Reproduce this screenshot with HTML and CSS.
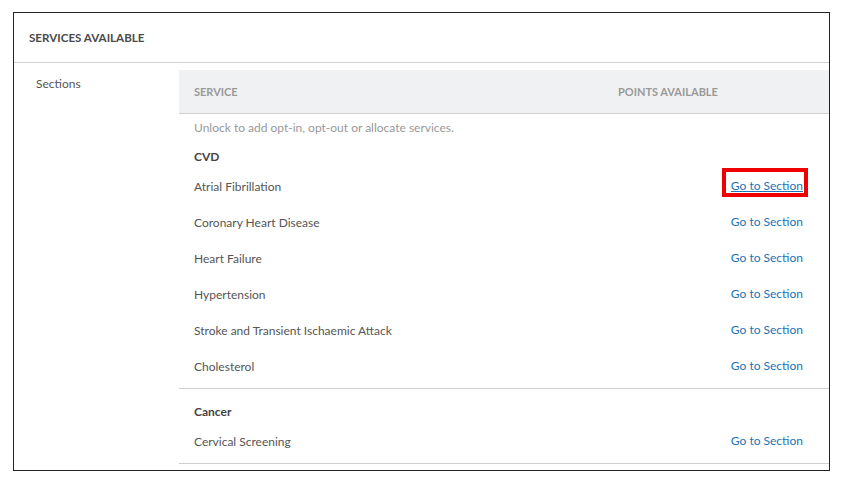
FILE: index.html
```html
<!DOCTYPE html>
<html>
<head>
<meta charset="utf-8">
<link rel="stylesheet" href="styles.css">
</head>
<body>
<div class="panel">
  <div class="panel-head">SERVICES AVAILABLE</div>
  <div class="panel-body">
    <div class="side">Sections</div>
    <div class="table">
      <div class="thead">
        <div class="col-service">SERVICE</div>
        <div class="col-points">POINTS AVAILABLE</div>
      </div>
      <div class="desc">Unlock to add opt-in, opt-out or allocate services.</div>
      <div class="group first">
        <div class="group-title">CVD</div>
        <div class="row"><span>Atrial Fibrillation</span><a class="link focused" href="#">Go to Section</a></div>
        <div class="row"><span>Coronary Heart Disease</span><a class="link" href="#">Go to Section</a></div>
        <div class="row"><span>Heart Failure</span><a class="link" href="#">Go to Section</a></div>
        <div class="row"><span>Hypertension</span><a class="link" href="#">Go to Section</a></div>
        <div class="row"><span>Stroke and Transient Ischaemic Attack</span><a class="link" href="#">Go to Section</a></div>
        <div class="row"><span>Cholesterol</span><a class="link" href="#">Go to Section</a></div>
      </div>
      <div class="group">
        <div class="group-title">Cancer</div>
        <div class="row"><span>Cervical Screening</span><a class="link" href="#">Go to Section</a></div>
      </div>
    </div>
  </div>
</div>
</body>
</html>
```
FILE: styles.css
```css
html, body {
  margin: 0;
  padding: 0;
  background: #fff;
}
body {
  font-family: Lato, "Open Sans", Arial, sans-serif;
  font-size: 12px;
  color: #555;
}
.panel {
  margin: 12px 0 0 13px;
  width: 815px;
  height: 457px;
  border: 1px solid #222;
  overflow: hidden;
}
.panel-head {
  height: 49px;
  line-height: 50px;
  padding-left: 15px;
  font-weight: 700;
  font-size: 11.6px;
  color: #4a4a4a;
  border-bottom: 1px solid #cfcfcf;
}
.panel-body {
  display: flex;
  padding-top: 7px;
}
.side {
  width: 143px;
  padding-left: 22px;
  line-height: 28px;
  color: #555;
}
.table {
  flex: 1;
}
.thead {
  display: flex;
  height: 43px;
  line-height: 44px;
  background: #f0f1f2;
  border-bottom: 1px solid #cfcfcf;
  font-weight: 700;
  font-size: 11px;
  color: #999;
  padding-left: 15px;
}
.col-service {
  width: 424px;
}
.desc {
  padding: 4px 0 0 15px;
  line-height: 20px;
  color: #999;
}
.group {
  padding: 12px 0 4px 15px;
  border-bottom: 1px solid #cfcfcf;
}
.group.first {
  padding-top: 8px;
}
.group-title {
  font-weight: 700;
  line-height: 22px;
  color: #444;
}
.row {
  display: flex;
  justify-content: space-between;
  align-items: center;
  height: 36px;
  padding-right: 26px;
}
.link {
  position: relative;
  color: #1a73b5;
  text-decoration: none;
  line-height: 20px;
}
.link.focused {
  text-decoration: underline;
}
.link.focused::after {
  content: "";
  position: absolute;
  left: -9px;
  right: -5px;
  top: -8px;
  bottom: -1px;
  border: 4px solid #f00000;
}
```
